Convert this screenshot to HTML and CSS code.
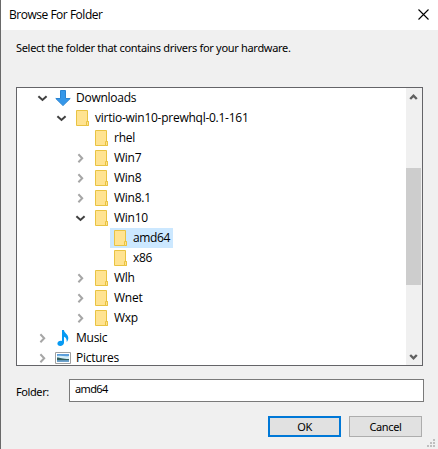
FILE: index.html
```html
<!DOCTYPE html>
<html lang="en">
<head>
<meta charset="utf-8">
<title>Browse For Folder</title>
<link rel="stylesheet" href="styles.css">
</head>
<body>
<svg class="defs" aria-hidden="true">
  <symbol id="open" viewBox="0 0 17 20"><path d="M4.4 8.2 8.5 12 12.6 8.2" fill="none" stroke="#404040" stroke-width="2"/></symbol>
  <symbol id="closed" viewBox="0 0 17 20"><path d="M6.4 6.2 10.2 10.2 6.4 14.2" fill="none" stroke="#a6a6a6" stroke-width="2"/></symbol>
  <symbol id="folder" viewBox="0 0 16 16"><path d="M2.5.5h11v11h1v4h-12z" fill="#ffe391" stroke="#e9c342"/><path d="M12.5 15.5v-4h2v4z" fill="#ffe391" stroke="#e9c342"/></symbol>
  <symbol id="download" viewBox="0 0 16 16"><path d="M5.5.5h5v8h4.7L8 15.6.8 8.5h4.7z" fill="#3597e9" stroke="#2a84d2"/></symbol>
  <symbol id="music" viewBox="0 0 16 16"><path d="M7 0h2c0 3 4.3 4.1 4.3 8 0 1.6-.7 3-1.6 4 .2-2.6-.6-4.7-2.7-5.3v5.8C9 14.6 7.2 16 5.2 16 3.5 16 2.4 15 2.4 13.6c0-2 2.2-3.3 4.6-2.7z" fill="#079af3"/></symbol>
  <symbol id="picture" viewBox="0 0 16 16"><path d="M.5 2.5h15v11H.5z" fill="#fff" stroke="#a0a0a0"/><path d="M2 4h12v8H2z" fill="#5c9fdc"/><path d="M2 6c4-1 8 1 12 0v3H2z" fill="#d3edf8"/><path d="M2 7.5c3 0 5 1.500 12 1.500v1.500H2z" fill="#315e5d"/><path d="M2 10.300h12V12H2z" fill="#6fa3cc"/></symbol>
</svg>
<main class="dialog">
  <header class="titlebar">
    <h1 class="title">Browse For Folder</h1>
    <svg class="close" viewBox="0 0 11 11"><path d="M.5.5l10 10M10.5.5l-10 10" stroke="#000" stroke-width="1.1"/></svg>
  </header>
  <p class="prompt">Select the folder that contains drivers for your hardware.</p>
  <section class="tree">
    <ul class="rows">
      <li class="row"><svg class="arrow"><use href="#open"/></svg><span class="item"><svg class="icon"><use href="#download"/></svg>Downloads</span></li>
      <li class="row l1"><svg class="arrow"><use href="#open"/></svg><span class="item"><svg class="icon"><use href="#folder"/></svg>virtio-win10-prewhql-0.1-161</span></li>
      <li class="row l2"><span class="arrow"></span><span class="item"><svg class="icon"><use href="#folder"/></svg>rhel</span></li>
      <li class="row l2"><svg class="arrow"><use href="#closed"/></svg><span class="item"><svg class="icon"><use href="#folder"/></svg>Win7</span></li>
      <li class="row l2"><svg class="arrow"><use href="#closed"/></svg><span class="item"><svg class="icon"><use href="#folder"/></svg>Win8</span></li>
      <li class="row l2"><svg class="arrow"><use href="#closed"/></svg><span class="item"><svg class="icon"><use href="#folder"/></svg>Win8.1</span></li>
      <li class="row l2"><svg class="arrow"><use href="#open"/></svg><span class="item"><svg class="icon"><use href="#folder"/></svg>Win10</span></li>
      <li class="row l3"><span class="arrow"></span><span class="item selected"><svg class="icon"><use href="#folder"/></svg>amd64</span></li>
      <li class="row l3"><span class="arrow"></span><span class="item"><svg class="icon"><use href="#folder"/></svg>x86</span></li>
      <li class="row l2"><svg class="arrow"><use href="#closed"/></svg><span class="item"><svg class="icon"><use href="#folder"/></svg>Wlh</span></li>
      <li class="row l2"><svg class="arrow"><use href="#closed"/></svg><span class="item"><svg class="icon"><use href="#folder"/></svg>Wnet</span></li>
      <li class="row l2"><svg class="arrow"><use href="#closed"/></svg><span class="item"><svg class="icon"><use href="#folder"/></svg>Wxp</span></li>
      <li class="row"><svg class="arrow"><use href="#closed"/></svg><span class="item"><svg class="icon"><use href="#music"/></svg>Music</span></li>
      <li class="row"><svg class="arrow"><use href="#closed"/></svg><span class="item"><svg class="icon"><use href="#picture"/></svg>Pictures</span></li>
    </ul>
    <div class="scrollbar">
      <svg class="step" viewBox="0 0 16 17"><path d="M4.2 11 7.5 7.7 10.8 11" fill="none" stroke="#606060" stroke-width="2.4"/></svg>
      <div class="thumb"></div>
      <svg class="step end" viewBox="0 0 16 17"><path d="M4.2 7 7.5 10.3 10.8 7" fill="none" stroke="#606060" stroke-width="2.4"/></svg>
    </div>
  </section>
  <div class="field">
    <label class="label" for="name">Folder:</label>
    <input class="input" id="name" value="amd64">
  </div>
  <footer class="buttons">
    <button class="button primary">OK</button>
    <button class="button cancel">Cancel</button>
  </footer>
  <svg class="grip" viewBox="0 0 8 8"><path d="M6 0h2v2H6zM3 3h2v2H3zM6 3h2v2H6zM0 6h2v2H0zM3 6h2v2H3zM6 6h2v2H6z" fill="#bfbfbf"/></svg>
</main>
</body>
</html>
```

FILE: styles.css
```css
* { box-sizing: border-box; }
body { margin: 0; overflow: hidden; font-family: "Open Sans", "Noto Sans", sans-serif; font-size: 12px; color: #000; }
.defs { display: none; }
.dialog { position: relative; display: flex; flex-direction: column; width: 438px; height: 449px; background: #f0f0f0; border-left: 1px solid #696969; }
.titlebar { display: flex; align-items: center; justify-content: space-between; height: 30px; padding: 0 9px 2px 8px; background: #fff; }
.title { margin: 2px 0 0; font-size: 12px; font-weight: 400; line-height: 18px; letter-spacing: -0.48px; }
.close { width: 11px; height: 11px; }
.prompt { height: 20px; margin: 8px 0 29px 15px; font: 11px/20px "Noto Sans", "Open Sans", sans-serif; letter-spacing: -0.31px; white-space: nowrap; }
.tree { display: flex; width: 407px; height: 279px; margin-left: 15px; background: #fff; border: 1px solid #646468; overflow: hidden; }
.rows { flex: 1; height: 277px; margin: 0; padding: 0; list-style: none; overflow: hidden; }
.row { display: flex; height: 20px; padding-left: 17px; }
.l1 { padding-left: 36px; }
.l2 { padding-left: 55px; }
.l3 { padding-left: 74px; }
.arrow { width: 17px; height: 20px; margin-right: 2px; }
.item { display: flex; align-items: center; gap: 5px; height: 20px; padding: 0 3px 0 2px; line-height: 20px; letter-spacing: -0.26px; white-space: nowrap; }
.selected { width: 63px; background: #cce8ff; letter-spacing: -0.4px; }
.icon { width: 16px; height: 16px; }
.scrollbar { display: flex; flex-direction: column; width: 16px; background: #f0f0f0; }
.step { width: 16px; height: 17px; }
.thumb { width: 15px; height: 117px; margin-top: 63px; background: #cdcdcd; }
.end { margin-top: auto; }
.field { display: flex; align-items: center; height: 23px; margin: 13px 0 0 15px; }
.label { width: 53px; padding-top: 2px; font: 11px/16px "Noto Sans", "Open Sans", sans-serif; letter-spacing: -0.4px; }
.input { width: 355px; height: 23px; padding: 0 5px 4px; border: 1px solid #7a7a7a; background: #fff; font: 11px "Noto Sans", "Open Sans", sans-serif; letter-spacing: -0.65px; }
.buttons { display: flex; gap: 8px; margin: 14px 0 0 267px; }
.button { width: 73px; height: 21px; padding: 0; border: 1px solid #adadad; background: #e1e1e1; color: #000; font: 11px/15px "Noto Sans", "Open Sans", sans-serif; letter-spacing: -0.35px; }
.primary { border: 2px solid #0078d7; }
.grip { position: absolute; right: 3px; bottom: 2px; width: 8px; height: 8px; }
```
